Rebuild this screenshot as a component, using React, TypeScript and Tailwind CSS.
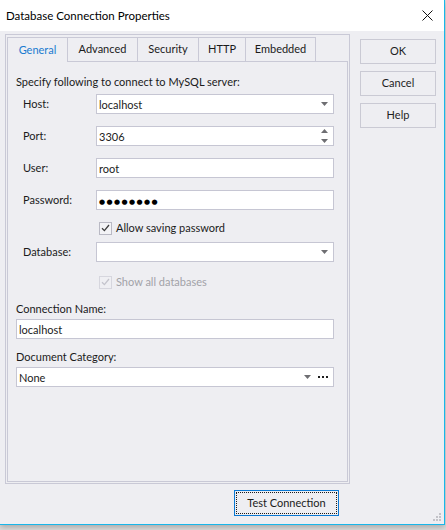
import React from "react";

const tabs = [
  { label: "General", w: "w-[60px]" },
  { label: "Advanced", w: "w-[70px]" },
  { label: "Security", w: "w-[61px]" },
  { label: "HTTP", w: "w-[47px]" },
  { label: "Embedded", w: "w-[71px]" },
];

const DownArrow = () => (
  <svg width="7" height="4" viewBox="0 0 7 4" className="shrink-0">
    <path d="M0 0h7L3.5 4z" fill="#6e6e72" />
  </svg>
);

const UpArrow = () => (
  <svg width="7" height="4" viewBox="0 0 7 4" className="shrink-0">
    <path d="M0 4h7L3.5 0z" fill="#6e6e72" />
  </svg>
);

const Check = ({ disabled }: { disabled?: boolean }) => (
  <div
    className={`w-[13px] h-[13px] border flex items-center justify-center ${
      disabled ? "border-[#d6d6de] bg-[#efeff3]" : "border-[#b9b9c4] bg-[#f3f3f6]"
    }`}
  >
    <svg width="9" height="8" viewBox="0 0 9 8">
      <path
        d="M1 4.2 3.4 6.6 8 1"
        fill="none"
        stroke={disabled ? "#c4c4cc" : "#3c3c3c"}
        strokeWidth="1.3"
      />
    </svg>
  </div>
);

const Field = ({ label, children }: { label: string; children: React.ReactNode }) => (
  <div className="flex items-center h-[20px]">
    <div className="w-[80px] pl-[7px] shrink-0">{label}</div>
    {children}
  </div>
);

const Input = ({ value, right, className = "w-[238px]" }: { value?: React.ReactNode; right?: React.ReactNode; className?: string }) => (
  <div className={`h-[20px] bg-white border border-[#c6c6d3] flex items-center pl-[2px] pr-[5px] ${className}`}>
    <span className="flex-1 leading-none">{value}</span>
    {right}
  </div>
);

const SideButton = ({ children }: { children: React.ReactNode }) => (
  <div className="w-[76px] h-[25px] border border-[#cacad4] flex items-center justify-center text-[#1e1e1e]">
    {children}
  </div>
);

export default function App() {
  return (
    <div className="w-[446px] h-[530px] bg-[#dcdcdc] font-['Lato',sans-serif] text-[11px] text-[#1b1b1b] overflow-hidden">
      <div className="relative w-[445px] h-[525px] bg-[#eeeef2] border-r border-b border-[#18b6ea] flex flex-col shadow-[0_2px_6px_rgba(0,0,0,0.25)]">
        {/* Title bar */}
        <div className="h-[31px] bg-white flex items-center justify-between pl-[6px] pr-[11px] shrink-0">
          <span className="text-[11.5px] text-black">Database Connection Properties</span>
          <svg width="11" height="11" viewBox="0 0 11 11">
            <path d="M0.5 0.5l10 10M10.5 0.5l-10 10" stroke="#111" strokeWidth="1" />
          </svg>
        </div>

        <div className="flex">
          {/* Group frame with tabs */}
          <div className="ml-[5px] mt-[3px] w-[345px] h-[450px] border border-[#c9c9d6] p-[1px] flex flex-col">
            <div className="flex h-[26px] pt-[1px]">
              {tabs.map((t, i) => (
                <div
                  key={t.label}
                  className={`${t.w} h-[25px] border-l border-t border-[#c9c9d6] flex items-center justify-center ${
                    i === 0 ? "text-[#1a7bd0]" : "border-b text-[#1b1b1b]"
                  } ${i === tabs.length - 1 ? "border-r" : ""}`}
                >
                  {t.label}
                </div>
              ))}
              <div className="flex-1 border-b border-[#c9c9d6]" />
            </div>
            <div className="flex-1 border-l border-r border-b border-[#c9c9d6] pl-[8px] flex flex-col">
              <div className="mt-[12px] h-[16px] leading-[16px]">Specify following to connect to MySQL server:</div>
              <div className="mt-[4px]">
                <Field label="Host:">
                  <Input value="localhost" right={<DownArrow />} />
                </Field>
              </div>
              <div className="mt-[12px]">
                <Field label="Port:">
                  <Input
                    value="3306"
                    right={
                      <div className="flex flex-col gap-[6px]">
                        <UpArrow />
                        <DownArrow />
                      </div>
                    }
                  />
                </Field>
              </div>
              <div className="mt-[12px]">
                <Field label="User:">
                  <Input value="root" />
                </Field>
              </div>
              <div className="mt-[12px]">
                <Field label="Password:">
                  <Input value={<span className="font-['DejaVu_Sans'] text-[7px] tracking-[1.4px] text-black">●●●●●●●●</span>} />
                </Field>
              </div>
              <div className="mt-[11px] h-[14px] flex items-center gap-[4px] pl-[83px]">
                <Check />
                <span>Allow saving password</span>
              </div>
              <div className="mt-[7px]">
                <Field label="Database:">
                  <Input right={<DownArrow />} />
                </Field>
              </div>
              <div className="mt-[13px] h-[14px] flex items-center gap-[4px] pl-[83px] text-[#a2a2a8]">
                <Check disabled />
                <span>Show all databases</span>
              </div>
              <div className="mt-[12px] h-[16px] leading-[16px]">Connection Name:</div>
              <div className="mt-[2px]">
                <Input value="localhost" className="w-[318px]" />
              </div>
              <div className="mt-[10px] h-[16px] leading-[16px]">Document Category:</div>
              <div className="mt-[2px]">
                <Input
                  value="None"
                  className="w-[318px]"
                  right={
                    <div className="flex items-center gap-[7px]">
                      <DownArrow />
                      <div className="flex gap-[2px]">
                        <span className="w-[2px] h-[2px] bg-[#1e1e1e]" />
                        <span className="w-[2px] h-[2px] bg-[#1e1e1e]" />
                        <span className="w-[2px] h-[2px] bg-[#1e1e1e]" />
                      </div>
                    </div>
                  }
                />
              </div>
            </div>
          </div>

          {/* Right side buttons */}
          <div className="ml-[10px] mt-[8px] flex flex-col gap-[7px]">
            <SideButton>OK</SideButton>
            <SideButton>Cancel</SideButton>
            <SideButton>Help</SideButton>
          </div>
        </div>

        {/* Test Connection */}
        <div className="mt-[6px] ml-[234px] w-[105px] h-[26px] border border-[#0a78d4] p-[1px]">
          <div className="w-full h-full border border-dotted border-[#1b1b1b] flex items-center justify-center">
            Test Connection
          </div>
        </div>

        {/* resize grip */}
        <svg className="absolute right-[2px] bottom-[2px]" width="9" height="9" viewBox="0 0 9 9">
          <g fill="#c2c2c8">
            <rect x="6" y="0" width="2" height="2" />
            <rect x="3" y="3" width="2" height="2" />
            <rect x="6" y="3" width="2" height="2" />
            <rect x="0" y="6" width="2" height="2" />
            <rect x="3" y="6" width="2" height="2" />
            <rect x="6" y="6" width="2" height="2" />
          </g>
        </svg>
      </div>
    </div>
  );
}
